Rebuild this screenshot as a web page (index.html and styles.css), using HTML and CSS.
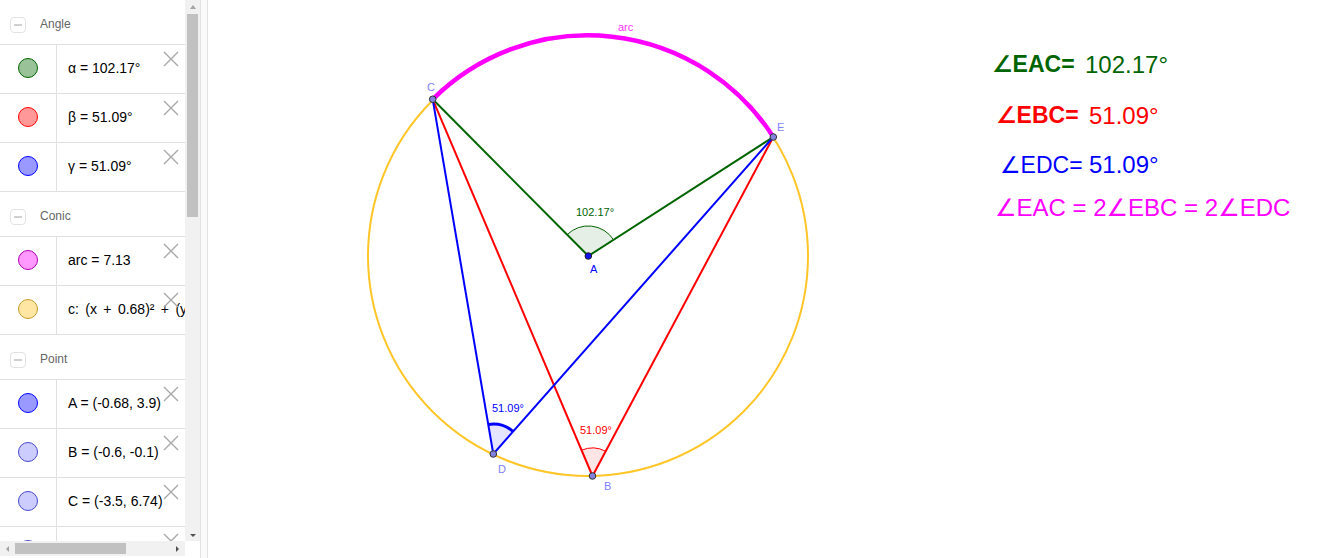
FILE: index.html
```html
<!DOCTYPE html>
<html>
<head>
<meta charset="utf-8">
<link rel="stylesheet" href="styles.css">
</head>
<body>
<div class="app">
  <div class="algebra">
    <div class="algebra-main">
      <div class="list">
        <div class="group-header"><span class="minus-box"><span class="minus"></span></span><span class="group-title">Angle</span></div>
        <div class="row"><div class="marble-cell"><span class="marble m-green"></span></div><div class="value">α = 102.17°</div><svg class="close" viewBox="0 0 16 16"><path d="M1 1L15 15M15 1L1 15"/></svg></div>
        <div class="row"><div class="marble-cell"><span class="marble m-red"></span></div><div class="value">β = 51.09°</div><svg class="close" viewBox="0 0 16 16"><path d="M1 1L15 15M15 1L1 15"/></svg></div>
        <div class="row"><div class="marble-cell"><span class="marble m-blue"></span></div><div class="value">γ = 51.09°</div><svg class="close" viewBox="0 0 16 16"><path d="M1 1L15 15M15 1L1 15"/></svg></div>
        <div class="group-header"><span class="minus-box"><span class="minus"></span></span><span class="group-title">Conic</span></div>
        <div class="row"><div class="marble-cell"><span class="marble m-magenta"></span></div><div class="value">arc = 7.13</div><svg class="close" viewBox="0 0 16 16"><path d="M1 1L15 15M15 1L1 15"/></svg></div>
        <div class="row"><div class="marble-cell"><span class="marble m-yellow"></span></div><div class="value wsp">c: (x + 0.68)² + (y − 3.9)² = 16</div><svg class="close" viewBox="0 0 16 16"><path d="M1 1L15 15M15 1L1 15"/></svg></div>
        <div class="group-header"><span class="minus-box"><span class="minus"></span></span><span class="group-title">Point</span></div>
        <div class="row"><div class="marble-cell"><span class="marble m-point"></span></div><div class="value">A = (-0.68, 3.9)</div><svg class="close" viewBox="0 0 16 16"><path d="M1 1L15 15M15 1L1 15"/></svg></div>
        <div class="row"><div class="marble-cell"><span class="marble m-free"></span></div><div class="value">B = (-0.6, -0.1)</div><svg class="close" viewBox="0 0 16 16"><path d="M1 1L15 15M15 1L1 15"/></svg></div>
        <div class="row"><div class="marble-cell"><span class="marble m-free"></span></div><div class="value">C = (-3.5, 6.74)</div><svg class="close" viewBox="0 0 16 16"><path d="M1 1L15 15M15 1L1 15"/></svg></div>
        <div class="row"><div class="marble-cell"><span class="marble m-free"></span></div><div class="value">D = (-2.61, 0.5)</div><svg class="close" viewBox="0 0 16 16"><path d="M1 1L15 15M15 1L1 15"/></svg></div>
      </div>
      <div class="vscroll">
        <div class="sb-btn"><span class="tri-up"></span></div>
        <div class="vthumb"></div>
        <div class="sb-fill"></div>
        <div class="sb-btn"><span class="tri-down"></span></div>
      </div>
    </div>
    <div class="hscroll-row">
      <div class="hscroll">
        <div class="sb-hbtn"><span class="tri-left"></span></div>
        <div class="hthumb"></div>
        <div class="sb-fill"></div>
        <div class="sb-hbtn"><span class="tri-right"></span></div>
      </div>
      <div class="corner"></div>
    </div>
  </div>
  <div class="splitter"></div>
  <div class="canvas">
    <svg class="graphics" width="1125" height="558" viewBox="0 0 1125 558">
      <g transform="translate(-208,0)">
        <circle cx="588" cy="256" r="220" fill="none" stroke="#ffc629" stroke-width="2"/>
        <path d="M432.7 99.3 A220 220 0 0 1 773.3 137" fill="none" stroke="#ff00ff" stroke-width="4.5"/>
        <path d="M588.3 256 L567.1 234.7 A30 30 0 0 1 613.5 239.7 Z" fill="rgba(0,100,0,0.1)" stroke="#006400" stroke-width="1"/>
        <path d="M592.5 476 L581.6 450.2 A28 28 0 0 1 605.7 451.3 Z" fill="rgba(255,0,0,0.1)" stroke="#ff0000" stroke-width="1"/>
        <path d="M493.3 454 L488.3 424.4 A30 30 0 0 1 513.1 431.5 Z" fill="rgba(0,0,255,0.1)" stroke="none"/>
        <path d="M488.3 424.4 A30 30 0 0 1 513.1 431.5" fill="none" stroke="#0000ff" stroke-width="3"/>
        <line x1="588.3" y1="256" x2="432.7" y2="99.3" stroke="#006400" stroke-width="2"/>
        <line x1="588.3" y1="256" x2="773.3" y2="137" stroke="#006400" stroke-width="2"/>
        <line x1="592.5" y1="476" x2="432.7" y2="99.3" stroke="#ff0000" stroke-width="2"/>
        <line x1="592.5" y1="476" x2="773.3" y2="137" stroke="#ff0000" stroke-width="2"/>
        <line x1="493.3" y1="454" x2="432.7" y2="99.3" stroke="#0000ff" stroke-width="2"/>
        <line x1="493.3" y1="454" x2="773.3" y2="137" stroke="#0000ff" stroke-width="2"/>
        <circle cx="432.7" cy="99.3" r="3.3" fill="#8282dc" stroke="#333" stroke-width="1"/>
        <circle cx="773.3" cy="137" r="3.3" fill="#8282dc" stroke="#333" stroke-width="1"/>
        <circle cx="493.3" cy="454" r="3.3" fill="#8282dc" stroke="#333" stroke-width="1"/>
        <circle cx="592.5" cy="476" r="3.3" fill="#8282dc" stroke="#333" stroke-width="1"/>
        <circle cx="588.3" cy="256" r="3.3" fill="#1010ee" stroke="#222" stroke-width="1"/>
        <g class="lbl">
          <text x="618" y="31" fill="#ff33ff">arc</text>
          <text x="427" y="91" fill="#7f7fff">C</text>
          <text x="777" y="131" fill="#7f7fff">E</text>
          <text x="590" y="273" fill="#0000ff">A</text>
          <text x="498" y="473" fill="#7f7fff">D</text>
          <text x="604" y="490" fill="#7f7fff">B</text>
          <text x="576" y="216" fill="#006400">102.17°</text>
          <text x="492" y="412" fill="#0000ff">51.09°</text>
          <text x="580" y="434" fill="#ff0000">51.09°</text>
        </g>
        <g class="big">
          <text x="992" y="72" fill="#006400" class="b">∠EAC=</text>
          <text x="1085" y="73" fill="#006400" class="num">102.17°</text>
          <text x="996" y="123" fill="#ff0000" class="b">∠EBC=</text>
          <text x="1089" y="124" fill="#ff0000" class="num">51.09°</text>
          <text x="1000" y="173" fill="#0000ff" class="mid">∠EDC=</text>
          <text x="1089" y="173" fill="#0000ff" class="num">51.09°</text>
          <text x="995" y="216" fill="#ff00ff" class="wide">∠EAC = 2∠EBC = 2∠EDC</text>
        </g>
      </g>
    </svg>
  </div>
</div>
</body>
</html>
```

FILE: styles.css
```css
* { box-sizing: border-box; }
html, body { margin: 0; padding: 0; background: #fff; }
body {
  font-family: "Liberation Sans", "DejaVu Sans", sans-serif;
  width: 1333px;
  height: 558px;
  overflow: hidden;
}
.app { display: flex; height: 558px; }

.algebra { width: 200px; display: flex; flex-direction: column; }
.algebra-main { display: flex; height: 541px; }
.list { width: 185px; overflow: hidden; background: #fff; }

.group-header {
  height: 45px;
  border-bottom: 1px solid #e0e0e0;
  display: flex;
  align-items: center;
  padding-top: 3px;
}
.minus-box {
  width: 16px; height: 16px;
  margin-left: 10px;
  margin-top: 2px;
  border: 1px solid #e2e2e2;
  border-radius: 4px;
  display: flex; align-items: center; justify-content: center;
}
.minus { width: 8px; height: 2px; background: #d0d0d0; }
.group-title { margin-left: 14px; font-size: 12px; color: #666; }

.row {
  position: relative;
  height: 49px;
  border-bottom: 1px solid #e0e0e0;
  display: flex;
}
.marble-cell {
  width: 57px;
  flex: none;
  border-right: 1px solid #e0e0e0;
  display: flex; align-items: center; justify-content: center;
  padding-bottom: 3px;
}
.marble {
  width: 20px; height: 20px; border-radius: 50%;
  border: 1px solid #000;
}
.m-green { background: #99c299; border-color: #006400; }
.m-red { background: #ff9999; border-color: #ff0000; }
.m-blue { background: #9999ff; border-color: #0000ff; }
.m-magenta { background: #ff99ff; border-color: #b000b0; }
.m-yellow { background: #ffe6a3; border-color: #c49a2a; }
.m-point { background: #9999ff; border-color: #0000ff; }
.m-free { background: #ccccff; border-color: #4848c8; }

.value {
  padding-left: 11px;
  font-size: 14px;
  color: #000;
  white-space: nowrap;
  display: flex; align-items: center;
  padding-bottom: 3px;
}
.value.wsp { word-spacing: 2.5px; }
.close {
  position: absolute;
  top: 6px; right: 6px;
  width: 16px; height: 16px;
}
.close path { stroke: #a8a8a8; stroke-width: 1.4; fill: none; }

.vscroll {
  width: 15px;
  background: #f1f1f1;
  display: flex; flex-direction: column;
}
.sb-btn { height: 14px; display: flex; align-items: center; justify-content: center; }
.sb-fill { flex: 1; }
.vthumb { height: 203px; width: 11px; margin-left: 2px; background: #c1c1c1; }
.tri-up { width: 0; height: 0; border-left: 3.5px solid transparent; border-right: 3.5px solid transparent; border-bottom: 4px solid #a3a3a3; }
.tri-down { width: 0; height: 0; border-left: 3px solid transparent; border-right: 3px solid transparent; border-top: 3px solid #505050; margin-top: 2px; }

.hscroll-row { display: flex; height: 15px; }
.hscroll { width: 185px; background: #f1f1f1; display: flex; align-items: center; }
.corner { width: 15px; background: #fff; }
.sb-hbtn { width: 15px; height: 15px; display: flex; align-items: center; justify-content: center; }
.hthumb { width: 111px; height: 11px; background: #c1c1c1; }
.tri-left { width: 0; height: 0; border-top: 3.5px solid transparent; border-bottom: 3.5px solid transparent; border-right: 3.5px solid #a3a3a3; }
.tri-right { width: 0; height: 0; border-top: 3.5px solid transparent; border-bottom: 3.5px solid transparent; border-left: 3.5px solid #505050; }

.splitter {
  width: 8px;
  background: #fafafa;
  border-left: 1px solid #e2e2e2;
  border-right: 1px solid #e2e2e2;
}
.canvas { flex: 1; position: relative; background: #fff; }
.graphics { display: block; }
.lbl text { font-family: "Liberation Sans", sans-serif; font-size: 11px; }
.big text { font-family: "Liberation Sans", "DejaVu Sans", sans-serif; font-size: 22px; }
.big text.b { font-weight: bold; font-size: 23px; }
.big text.mid { font-size: 23px; }
.big text.num { font-size: 24px; }
.big text.wide { font-size: 24px; }
```
